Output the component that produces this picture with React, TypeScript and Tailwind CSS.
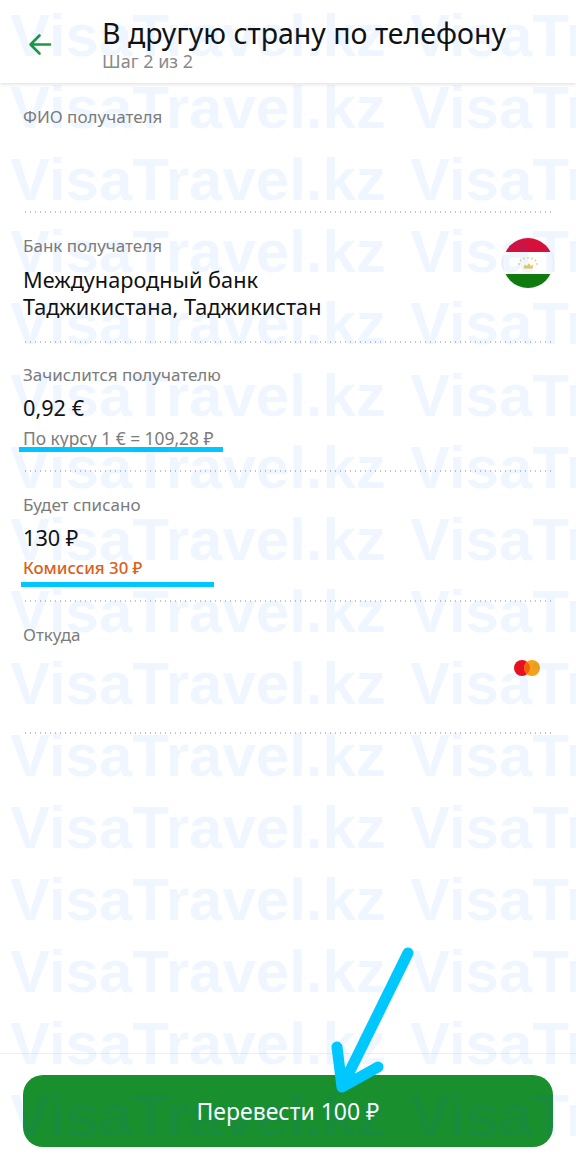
const font = { fontFamily: '"Noto Sans", "Open Sans", sans-serif' };

const watermarkRows = Array.from({ length: 17 }, (_, i) => i);

function Divider() {
  return <div className="h-[2px] w-[530px] bg-[radial-gradient(circle,#c4c4c4_1px,transparent_1px)] bg-[length:5px_2px]" />;
}

function Label({ children }: { children: string }) {
  return <p className="text-[17px] leading-[20px] text-[#7c7c7c]">{children}</p>;
}

function TajikFlag() {
  return (
    <svg width="52" height="52" viewBox="0 0 52 52" className="shrink-0">
      <defs>
        <clipPath id="flag-clip">
          <circle cx="26" cy="26" r="25" />
        </clipPath>
      </defs>
      <circle cx="26" cy="26" r="25.5" fill="#fff" stroke="#f4f4f4" />
      <g clipPath="url(#flag-clip)">
        <rect x="0" y="0" width="52" height="15" fill="#d6103b" />
        <rect x="0" y="37" width="52" height="15" fill="#0f7a10" />
      </g>
      <path d="M21.5 31.5h9l.8-4-2.3 1.6-2-3-2 3-2.3-1.6z" fill="#eccb5c" />
      {[
        [17, 27],
        [18.5, 23.5],
        [22, 21.5],
        [26, 20.8],
        [30, 21.5],
        [33.5, 23.5],
        [35, 27],
      ].map(([cx, cy]) => (
        <circle key={cx} cx={cx} cy={cy} r="0.9" fill="#e3d38c" />
      ))}
    </svg>
  );
}

function MastercardIcon() {
  return (
    <svg width="28" height="18" viewBox="0 0 28 18">
      <circle cx="9" cy="9" r="8" fill="#e8101f" />
      <circle cx="19" cy="9" r="8" fill="#f5a219" />
      <path d="M14 2.76a8 8 0 0 1 0 12.48a8 8 0 0 1 0-12.48z" fill="#f4610f" />
    </svg>
  );
}

export default function App() {
  return (
    <div className="relative flex h-[1163px] w-full flex-col overflow-hidden bg-white" style={font}>
      <header className="relative flex h-[83px] shrink-0 items-start bg-white pl-[27px] shadow-[0_1px_4px_rgba(0,0,0,0.14)]">
        <svg width="26" height="26" viewBox="0 0 26 26" className="mt-[31px]" fill="none" stroke="#1c9a3e" strokeWidth="2.6" strokeLinecap="round" strokeLinejoin="round">
          <path d="M23 13.5H4M12.5 4.5l-9 9 9 9" />
        </svg>
        <div className="ml-[49px]">
          <h1 className="mt-[14px] text-[28.5px] leading-[38px] font-normal whitespace-nowrap text-[#111]">В другую страну по телефону</h1>
          <p className="pt-[1px] text-[18px] leading-[17px] text-[#8a8a8a]">Шаг 2 из 2</p>
        </div>
      </header>

      <main className="flex-1 pl-[23px]">
        <section className="h-[128px] pt-[24px]">
          <Label>ФИО получателя</Label>
        </section>
        <Divider />

        <section className="flex h-[128px] items-start justify-between pt-[23px] pr-[22px]">
          <div>
            <Label>Банк получателя</Label>
            <p className="mt-[10px] text-[21.7px] leading-[27px] text-[#111]">
              Международный банк
              <br />
              Таджикистана, Таджикистан
            </p>
          </div>
          <div className="mt-[1px]">
            <TajikFlag />
          </div>
        </section>
        <Divider />

        <section className="relative h-[127px] pt-[22px]">
          <Label>Зачислится получателю</Label>
          <p className="mt-[9px] text-[21.7px] leading-[28px] text-[#111]">0,92 €</p>
          <p className="mt-[6px] text-[17.4px] leading-[20px] text-[#7c7c7c]">По курсу 1 € = 109,28 ₽</p>
          <span className="absolute top-[104px] left-[-4px] h-[5px] w-[204px] bg-[#00c8ff]" />
        </section>
        <Divider />

        <section className="relative h-[128px] pt-[23px]">
          <Label>Будет списано</Label>
          <p className="mt-[9px] text-[21.7px] leading-[28px] text-[#111]">130 ₽</p>
          <p className="mt-[6px] text-[16.8px] leading-[20px] font-medium text-[#d9601a]">Комиссия 30 ₽</p>
          <span className="absolute top-[110px] left-[-2px] h-[5px] w-[193px] bg-[#00c8ff]" />
        </section>
        <Divider />

        <section className="relative flex h-[130px] items-start justify-between pt-[23px] pr-[35px]">
          <Label>Откуда</Label>
          <div className="mt-[34px]">
            <MastercardIcon />
          </div>
        </section>
        <Divider />
      </main>

      <footer className="h-[110px] shrink-0 border-t border-[#f0f0f0] px-[23px] pt-[21px]">
        <button className="flex h-[72px] w-full items-center justify-center rounded-[20px] bg-[#1a8f2e] text-[23px] text-white">
          Перевести 100 ₽
        </button>
      </footer>

      <div className="pointer-events-none absolute inset-0 overflow-hidden pl-[10px]" aria-hidden="true">
        {watermarkRows.map((row) => (
          <div
            key={row}
            className="flex h-[72px] text-[60px] leading-[72px] font-bold whitespace-nowrap text-[#0066ff]/[0.06] [font-family:'Liberation_Sans',Arial,sans-serif]"
          >
            <span className="w-[400px] shrink-0">VisaTravel.kz</span>
            <span className="w-[400px] shrink-0">VisaTravel.kz</span>
          </div>
        ))}
      </div>

      <svg className="pointer-events-none absolute top-[940px] left-[325px] blur-[0.6px]" width="95" height="160" viewBox="325 940 95 160" fill="none" stroke="#00c8ff" strokeWidth="11" strokeLinecap="round" strokeLinejoin="round">
        <path d="M408 953L342 1087M337 1047L342 1087L378 1067" />
      </svg>
    </div>
  );
}
